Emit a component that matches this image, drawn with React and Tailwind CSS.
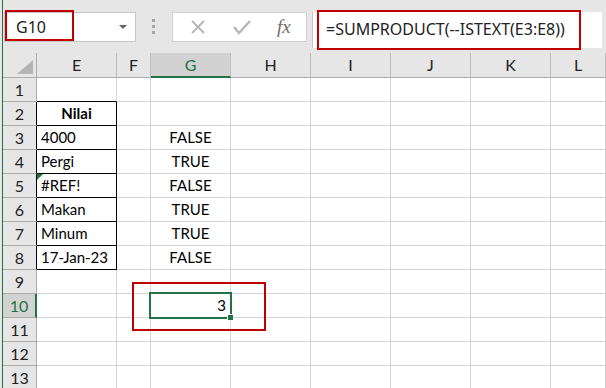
import React from 'react';

const cols = [
  { k: 'E', w: 'w-[80px]' },
  { k: 'F', w: 'w-[34px]' },
  { k: 'G', w: 'w-[80px]' },
  { k: 'H', w: 'w-[80px]' },
  { k: 'I', w: 'w-[80px]' },
  { k: 'J', w: 'w-[80px]' },
  { k: 'K', w: 'w-[80px]' },
  { k: 'L', w: 'flex-1' },
];

const data = {
  2: { E: 'Nilai' },
  3: { E: '4000', G: 'FALSE' },
  4: { E: 'Pergi', G: 'TRUE' },
  5: { E: '#REF!', G: 'FALSE' },
  6: { E: 'Makan', G: 'TRUE' },
  7: { E: 'Minum', G: 'TRUE' },
  8: { E: '17-Jan-23', G: 'FALSE' },
  10: { G: '3' },
};

const rows = [1, 2, 3, 4, 5, 6, 7, 8, 9, 10, 11, 12, 13];

const Cell = ({ col, row }) => {
  const v = data[row]?.[col.k];
  const boxed = col.k === 'E' && row >= 2 && row <= 8;
  let cls = `${col.w} shrink-0 h-full border-r border-b flex items-center px-[4px] relative `;
  if (boxed) cls += 'border-r-black border-b-black ';
  else if (col.k === 'E' && row === 1) cls += 'border-r-[#d4d4d4] border-b-black ';
  else cls += 'border-[#d4d4d4] ';
  if (row === 2) cls += 'justify-center font-bold ';
  else if (col.k === 'G' && row === 10) cls += 'justify-end ';
  else if (col.k === 'G') cls += 'justify-center ';
  return (
    <div className={cls}>
      {row === 5 && col.k === 'E' && (
        <div className="absolute left-0 top-0 w-0 h-0 border-t-[6px] border-t-[#1e7b34] border-r-[6px] border-r-transparent" />
      )}
      {v}
    </div>
  );
};

export default function App() {
  return (
    <div className="relative w-[606px] h-[388px] overflow-hidden flex bg-white text-black" style={{ fontFamily: 'Lato, "Open Sans", sans-serif' }}>
      <div className="w-[2px] bg-[#e6e6e6]" />
      <div className="w-[1px] bg-[#217346]" />
      <div className="flex-1 flex flex-col">
        {/* formula bar */}
        <div className="h-[53px] shrink-0 bg-[#e6e6e6] flex items-start pt-[12px] pl-[1px]">
          <div className="w-[132px] h-[30px] bg-white border border-[#c6c6c6] flex items-center pl-[11px] pr-[8px] text-[16px] text-[#222]" style={{ fontFamily: '"Noto Sans", sans-serif' }}>
            <span className="flex-1">G10</span>
            <div className="w-0 h-0 border-l-[4px] border-r-[4px] border-t-[4px] border-l-transparent border-r-transparent border-t-[#666]" />
          </div>
          <div className="ml-[16px] mt-[7px] flex flex-col gap-[3px]">
            <div className="w-[3px] h-[3px] bg-[#a6a6a6]" />
            <div className="w-[3px] h-[3px] bg-[#a6a6a6]" />
            <div className="w-[3px] h-[3px] bg-[#a6a6a6]" />
          </div>
          <div className="ml-[17px] w-[135px] h-[30px] bg-white border border-[#d0d0d0] flex items-center">
            <svg className="ml-[17px]" width="16" height="16" viewBox="0 0 16 16">
              <path d="M2 2 L14 14 M14 2 L2 14" stroke="#b5b5b5" strokeWidth="1.8" fill="none" />
            </svg>
            <svg className="ml-[27px]" width="18" height="16" viewBox="0 0 18 16">
              <path d="M1 8 L6 14 L17 2" stroke="#b5b5b5" strokeWidth="2.4" fill="none" />
            </svg>
            <span className="ml-[26px] italic text-[19px] text-[#6b6b6b]" style={{ fontFamily: '"Liberation Serif", serif' }}>fx</span>
          </div>
          <div className="ml-[5px] w-[290px] h-[36px] bg-white border-l border-[#c6c6c6] flex items-center pl-[13px] pb-[3px] text-[16px] text-[#222]" style={{ fontFamily: '"Noto Sans", sans-serif' }}>
            =SUMPRODUCT(--ISTEXT(E3:E8))
          </div>
        </div>
        {/* column headers */}
        <div className="h-[25px] shrink-0 flex bg-[#e6e6e6] text-[16px] text-[#222]">
          <div className="w-[34px] shrink-0 h-full border-r border-b border-[#ababab] relative">
            <div className="absolute right-[3px] bottom-[3px] w-0 h-0 border-l-[16px] border-l-transparent border-b-[14px] border-b-[#b4b4b4]" />
          </div>
          {cols.map((c) => (
            <div
              key={c.k}
              className={`${c.w} shrink-0 h-full flex items-center justify-center border-r border-[#bdbdbd] ${c.k === 'G' ? 'bg-[#d2d2d2] text-[#217346] border-b-2 border-b-[#217346]' : 'border-b border-b-[#ababab]'}`}
            >
              {c.k}
            </div>
          ))}
        </div>
        {/* rows */}
        {rows.map((r) => (
          <div key={r} className="h-[24px] shrink-0 flex text-[15px]">
            <div
              className={`w-[34px] shrink-0 h-full flex items-center justify-center text-[16px] border-b border-[#ababab] ${r === 10 ? 'bg-[#d2d2d2] text-[#217346] border-r-2 border-r-[#217346]' : 'bg-[#e6e6e6] text-[#222]'} ${r >= 2 && r <= 8 ? 'border-r border-r-black' : r !== 10 ? 'border-r border-r-[#ababab]' : ''}`}
            >
              {r}
            </div>
            {cols.map((c) => (
              <Cell key={c.k} col={c} row={r} />
            ))}
          </div>
        ))}
      </div>

      {/* red callouts */}
      <div className="absolute left-[5px] top-[10px] w-[69px] h-[31px] border-2 border-[#c00000]" />
      <div className="absolute left-[317px] top-[10px] w-[264px] h-[40px] border-2 border-[#c00000]" />
      <div className="absolute left-[132px] top-[282px] w-[134px] h-[49px] border-2 border-[#c00000]" />
      {/* active cell */}
      <div className="absolute left-[149px] top-[292px] w-[83px] h-[27px] border-2 border-[#217346]" />
      <div className="absolute left-[227px] top-[314px] w-[7px] h-[7px] bg-[#217346] border border-white" />
    </div>
  );
}
